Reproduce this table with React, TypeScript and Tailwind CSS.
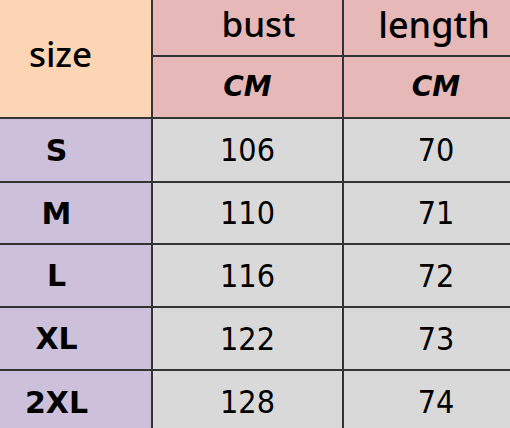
const sizes = [
  { size: "S", bust: "106", length: "70", h: "h-[62px]" },
  { size: "M", bust: "110", length: "71", h: "h-[60px]" },
  { size: "L", bust: "116", length: "72", h: "h-[61px]" },
  { size: "XL", bust: "122", length: "73", h: "h-[61px]" },
  { size: "2XL", bust: "128", length: "74", h: "h-[62px]" },
];

const headFont = "font-['Noto_Sans','Open_Sans',sans-serif] font-medium";
const comicFont = "font-['DejaVu_Sans',sans-serif] font-bold";
const numFont = "font-['DejaVu_Sans_Condensed','DejaVu_Sans',sans-serif]";

const App = () => {
  return (
    <div className="w-[510px] h-[428px] overflow-hidden bg-white">
      <div className="grid grid-cols-[151px_189px_1fr] gap-[2px] bg-[#333333] text-black">
        {/* header */}
        <div
          className={`row-span-2 bg-[#fcd5b4] flex items-center justify-center pr-[30px] pb-[8px] text-[35px] ${headFont}`}
        >
          size
        </div>
        <div
          className={`h-[55px] bg-[#e6b8b7] flex items-center justify-center pl-[22px] pb-[6px] text-[35px] ${headFont}`}
        >
          bust
        </div>
        <div
          className={`h-[55px] bg-[#e6b8b7] flex items-center justify-center pl-[14px] pb-[6px] text-[36px] ${headFont}`}
        >
          length
        </div>
        <div
          className={`h-[60px] bg-[#e6b8b7] flex items-center justify-center italic text-[28px] ${comicFont}`}
        >
          CM
        </div>
        <div
          className={`h-[60px] bg-[#e6b8b7] flex items-center justify-center pl-[18px] italic text-[28px] ${comicFont}`}
        >
          CM
        </div>

        {/* rows */}
        {sizes.map((row) => (
          <div key={row.size} className="contents">
            <div
              className={`${row.h} bg-[#ccc0da] flex items-center justify-center pr-[38px] text-[30px] ${comicFont}`}
            >
              {row.size}
            </div>
            <div
              className={`${row.h} bg-[#d9d9d9] flex items-center justify-center text-[32px] ${numFont}`}
            >
              {row.bust}
            </div>
            <div
              className={`${row.h} bg-[#d9d9d9] flex items-center justify-center pl-[18px] text-[32px] ${numFont}`}
            >
              {row.length}
            </div>
          </div>
        ))}
      </div>
    </div>
  );
};

export default App;
